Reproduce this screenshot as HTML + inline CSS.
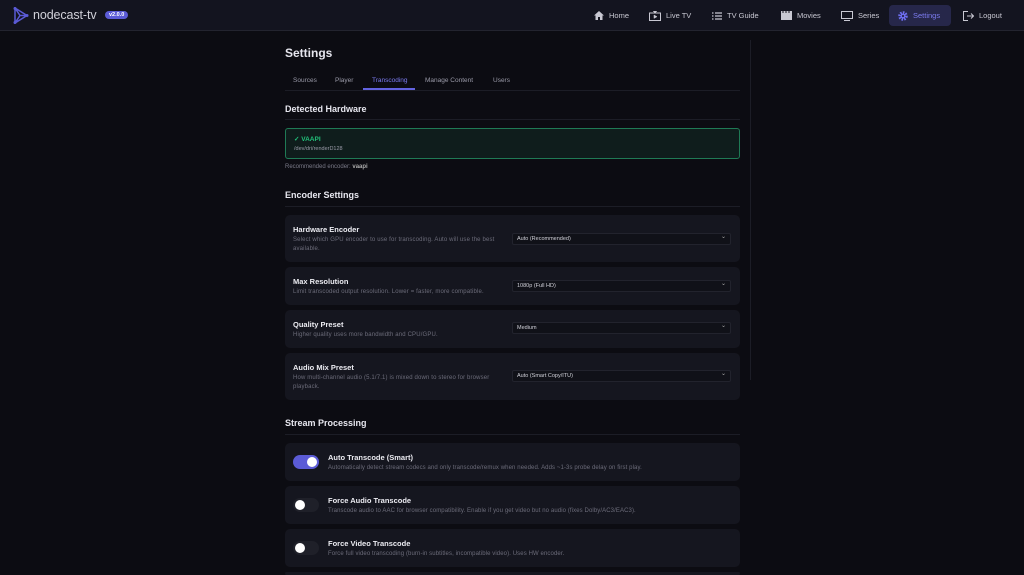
<!DOCTYPE html>
<html><head><style>
*{box-sizing:border-box;margin:0;padding:0}
html{width:1024px;height:575px;overflow:hidden}
body{width:1024px;height:575px;overflow:hidden;background:#0c0c12;font-family:"Liberation Sans",sans-serif;color:#e6e6ee;position:relative}
.hdr{position:absolute;left:0;top:0;width:1024px;height:31px;background:#13141f;border-bottom:1px solid #23242f}
.logo{position:absolute;left:13px;top:7px}
.brand{position:absolute;left:33px;top:8px;font-size:12.5px;color:#d0d0d8;letter-spacing:-0.1px;font-weight:300}
.ver{position:absolute;left:105px;top:11px;background:#5b5bd6;color:#fff;font-size:5.5px;font-weight:bold;padding:1px 4px;border-radius:5px}
.nav{position:absolute;top:5px;height:21px;font-size:7.5px;color:#c8c8d2;display:flex;align-items:center;gap:5px;padding:0 9px}
.nav.act{background:#26274a;color:#7c7cf0;border-radius:4px}
.vline{position:absolute;left:750px;top:40px;width:1px;height:340px;background:#1c1d26}
.c{position:absolute;left:285px;width:455px}
h1{position:absolute;left:285px;top:45px;font-size:12px;font-weight:bold}
.tabs{top:75px;height:15px;border-bottom:1px solid #1c1d26;font-size:6.5px;color:#9a9aa8}
.tabs span{position:absolute;top:1px}
h2{position:absolute;left:285px;font-size:9px;font-weight:bold;color:#e8e8f0}
.ln{height:1px;background:#1c1d26}
.green{top:128px;height:31px;border:1px solid #1f7a55;background:#0f1d1c;border-radius:3px}
.card{background:#15161f;border-radius:5px}
.card .t{position:absolute;left:8px;font-size:7.5px;font-weight:bold;color:#ececf2}
.card .d{position:absolute;left:8px;font-size:6px;color:#6c6c7a;line-height:9px;width:205px;letter-spacing:.15px}
.sel{position:absolute;left:227px;width:219px;height:12px;background:#101118;border:1px solid #22232d;border-radius:2px;font-size:5.5px;color:#d0d0d8;padding:2px 4px}
.sel:after{content:"⌄";position:absolute;right:4px;top:-1px;font-size:6px;color:#aaa}
.tg{position:absolute;left:8px;width:26px;height:14px;border-radius:7px;background:#1f2029}
.tg i{position:absolute;top:2px;width:10px;height:10px;border-radius:50%;background:#fff}
.card .t2{position:absolute;left:43px;font-size:7.5px;font-weight:bold;color:#ececf2}
.card .d2{position:absolute;left:43px;font-size:6px;color:#6c6c7a;letter-spacing:.1px;white-space:nowrap}
</style></head><body>
<div class="hdr">
<svg class="logo" width="16" height="17" viewBox="0 0 16 17"><path d="M2 1 L14 8.5 L2 16 Z M2 1 L7 8.5 L2 16 M7 8.5 H14" fill="none" stroke="#5b5bd6" stroke-width="1.5"/><circle cx="2" cy="1.5" r="1.5" fill="#5b5bd6"/><circle cx="2" cy="15.5" r="1.5" fill="#5b5bd6"/><circle cx="14" cy="8.5" r="1.5" fill="#5b5bd6"/></svg>
<div class="brand">nodecast-tv</div><div class="ver">v2.0.0</div>
<div class="nav" style="left:585px"><svg width="10" height="9" viewBox="0 0 10 9"><path d="M5 0L0 4.5H1.5V9H4V6H6V9H8.5V4.5H10Z" fill="#c8c8d2"/></svg>Home</div>
<div class="nav" style="left:640px"><svg width="12" height="10" viewBox="0 0 12 10"><rect x="0.5" y="2" width="11" height="7.5" fill="none" stroke="#c8c8d2"/><path d="M5 4L8 5.7L5 7.4Z M4 0L6 2L8 0" fill="#c8c8d2" stroke="#c8c8d2" stroke-width=".5"/></svg>Live TV</div>
<div class="nav" style="left:703px"><svg width="10" height="8" viewBox="0 0 10 8"><path d="M0 1H1.5M3 1H10M0 4H1.5M3 4H10M0 7H1.5M3 7H10" stroke="#c8c8d2" stroke-width="1.2"/></svg>TV Guide</div>
<div class="nav" style="left:772px"><svg width="11" height="9" viewBox="0 0 11 9"><path d="M0 0H11V9H0Z" fill="#c8c8d2"/><path d="M2 0V2M5 0V2M8 0V2" stroke="#13141f"/></svg>Movies</div>
<div class="nav" style="left:832px"><svg width="12" height="10" viewBox="0 0 12 10"><rect x="0.5" y="0.5" width="11" height="7" fill="none" stroke="#c8c8d2"/><path d="M3 9.5H9" stroke="#c8c8d2"/></svg>Series</div>
<div class="nav act" style="left:889px;width:62px"><svg width="10" height="10" viewBox="0 0 10 10"><circle cx="5" cy="5" r="3.5" fill="none" stroke="#6e6ef0" stroke-width="2.5" stroke-dasharray="1.6 1.1"/><circle cx="5" cy="5" r="2.6" fill="#6e6ef0"/><circle cx="5" cy="5" r="1.1" fill="#26274a"/></svg>Settings</div>
<div class="nav" style="left:954px"><svg width="11" height="10" viewBox="0 0 11 10"><path d="M5 0.5H0.5V9.5H5M4 5H10.5M8 2.5L10.5 5L8 7.5" fill="none" stroke="#c8c8d2"/></svg>Logout</div>
</div>
<div class="vline"></div>
<h1 style="top:46px">Settings</h1>
<div class="c tabs" style="top:76px"><span style="left:8px">Sources</span><span style="left:50px">Player</span><span style="left:87px;color:#7c7cf0">Transcoding</span><span style="left:140px">Manage Content</span><span style="left:208px">Users</span><div style="position:absolute;left:78px;top:12px;width:52px;height:1.5px;background:#6363e0"></div></div>
<h2 style="top:104px">Detected Hardware</h2>
<div class="c ln" style="top:119px"></div>
<div class="c green"><div style="position:absolute;left:8px;top:6px;font-size:6.5px;font-weight:bold;color:#22c07a">✓ VAAPI</div><div style="position:absolute;left:8px;top:17px;font-size:5.5px;color:#9a9aa8">/dev/dri/renderD128</div></div>
<div class="c" style="top:164px;font-size:6px;color:#7a7a88">Recommended encoder: <b style="color:#aaa">vaapi</b></div>
<h2 style="top:190px">Encoder Settings</h2>
<div class="c ln" style="top:206px"></div>
<div class="c card" style="top:215px;height:47px"><div class="t" style="top:10px">Hardware Encoder</div><div class="d" style="top:21px">Select which GPU encoder to use for transcoding. Auto will use the best available.</div><div class="sel" style="top:18px">Auto (Recommended)</div></div>
<div class="c card" style="top:267px;height:38px"><div class="t" style="top:10px">Max Resolution</div><div class="d" style="top:21px;width:230px">Limit transcoded output resolution. Lower = faster, more compatible.</div><div class="sel" style="top:13px">1080p (Full HD)</div></div>
<div class="c card" style="top:310px;height:38px"><div class="t" style="top:10px">Quality Preset</div><div class="d" style="top:21px">Higher quality uses more bandwidth and CPU/GPU.</div><div class="sel" style="top:12px">Medium</div></div>
<div class="c card" style="top:353px;height:47px"><div class="t" style="top:10px">Audio Mix Preset</div><div class="d" style="top:21px">How multi-channel audio (5.1/7.1) is mixed down to stereo for browser playback.</div><div class="sel" style="top:17px">Auto (Smart Copy/ITU)</div></div>
<h2 style="top:418px">Stream Processing</h2>
<div class="c ln" style="top:434px"></div>
<div class="c card" style="top:443px;height:38px"><div class="tg" style="top:12px;background:#5b5bd6"><i style="left:14px"></i></div><div class="t2" style="top:10px">Auto Transcode (Smart)</div><div class="d2" style="top:22px">Automatically detect stream codecs and only transcode/remux when needed. Adds ~1-3s probe delay on first play.</div></div>
<div class="c card" style="top:486px;height:38px"><div class="tg" style="top:12px"><i style="left:2px"></i></div><div class="t2" style="top:10px">Force Audio Transcode</div><div class="d2" style="top:22px">Transcode audio to AAC for browser compatibility. Enable if you get video but no audio (fixes Dolby/AC3/EAC3).</div></div>
<div class="c card" style="top:529px;height:38px"><div class="tg" style="top:12px"><i style="left:2px"></i></div><div class="t2" style="top:10px">Force Video Transcode</div><div class="d2" style="top:22px">Force full video transcoding (burn-in subtitles, incompatible video). Uses HW encoder.</div></div>
<div class="c card" style="top:572px;height:3px"></div>
</body></html>
